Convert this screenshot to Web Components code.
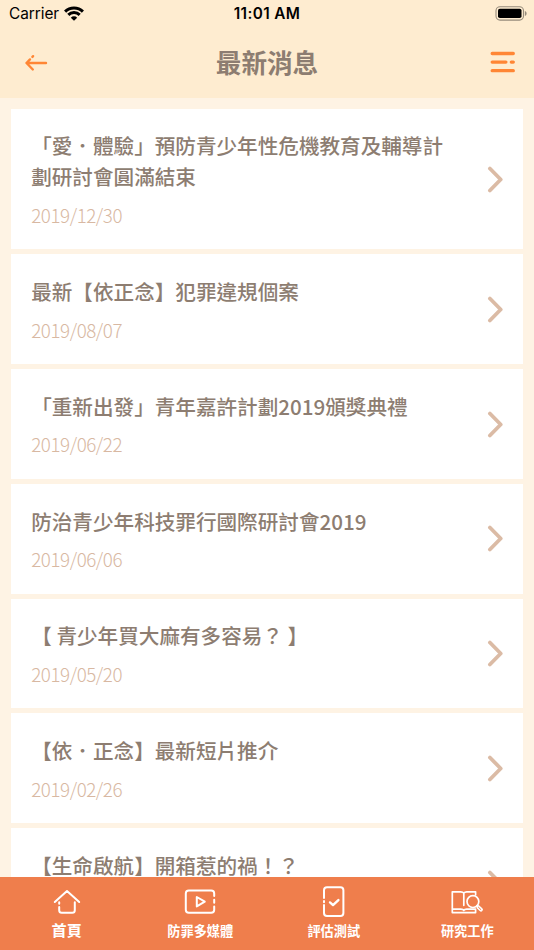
<!DOCTYPE html>
<html lang="zh-Hant">
<head>
<meta charset="utf-8">
<title>最新消息</title>
<style>
  html, body { height: 100%; }
  body {
    margin: 0;
    overflow: hidden;
    background: #fef3e4;
    font-family: "Noto Sans CJK TC", sans-serif;
  }
</style>
</head>
<body>
<news-app></news-app>

<script>
// Attach an open shadow root filled from a template
class BaseElement extends HTMLElement {
  constructor() {
    super();
    this.attachShadow({ mode: "open" });
    const template = document.createElement("template");
    template.innerHTML = this.constructor.markup;
    this.shadowRoot.appendChild(template.content.cloneNode(true));
  }
}

class StatusBar extends BaseElement {
  static markup = `
    <style>
      :host {
        display: grid;
        grid-template-columns: 1fr auto 1fr;
        align-items: center;
        height: 27px;
        padding: 0 7px 0 9px;
        box-sizing: border-box;
        font-family: Inter, sans-serif;
        font-size: 15.4px;
        color: #000;
      }
      .carrier { display: flex; align-items: center; gap: 5px; }
      .carrier span { letter-spacing: -0.05px; }
      .time { margin-right: 2px; font-weight: 600; font-size: 15.3px; letter-spacing: 0.4px; }
      .battery { justify-self: end; display: block; }
      svg { display: block; }
    </style>
    <div class="carrier">
      <span>Carrier</span>
      <svg width="20" height="15" viewBox="0 0 20 15" fill="none" stroke="#000" stroke-width="3">
        <path d="M1.1 5.6a12.6 12.6 0 0 1 17.8 0"/>
        <path d="M4.3 8.9a8.1 8.1 0 0 1 11.4 0"/>
        <path d="M10 14.8 6.8 11.7a4.5 4.5 0 0 1 6.4 0z" fill="#000" stroke="none"/>
      </svg>
    </div>
    <span class="time">11:01 AM</span>
    <svg class="battery" width="32" height="15" viewBox="0 0 32 15">
      <rect x="1" y=".7" width="27.5" height="13.4" rx="4" fill="none" stroke="#968b7b" stroke-width="1.1"/>
      <rect x="3" y="2.7" width="23.5" height="9.4" rx="1.8" fill="#000"/>
      <path d="M29.9 5v5c1.2-.5 1.7-1.4 1.7-2.5s-.5-2-1.7-2.5z" fill="#968b7b"/>
    </svg>
  `;
}

class PageHeader extends BaseElement {
  static markup = `
    <style>
      :host {
        display: grid;
        grid-template-columns: 1fr auto 1fr;
        align-items: center;
        height: 71px;
        padding: 0 18px 2px;
        box-sizing: border-box;
      }
      h1 {
        margin: 0;
        font-size: 25.6px;
        font-weight: 700;
        line-height: 38px;
        color: #8d7d71;
      }
      svg { display: block; }
      .back { margin: 2px 0 0 6px; }
      .menu { justify-self: end; }
    </style>
    <svg class="back" width="25" height="18" viewBox="0 0 25 18" fill="none" stroke="#ff8635" stroke-width="2.4" stroke-linecap="round" stroke-linejoin="round">
      <path d="M22 9H2.5l6.3 6.5M2.5 9 6 5.4M8.4 2.9l.7-.7"/>
    </svg>
    <h1><slot></slot></h1>
    <svg class="menu" width="26" height="22" viewBox="0 0 26 22" fill="none" stroke="#ff8635" stroke-width="3.3" stroke-linecap="round">
      <path d="M2.2 2.5h21.1M2.2 11.1h13.7M21.3 11.1h2M2.2 19.7h21.1"/>
    </svg>
  `;
}

class NewsItem extends BaseElement {
  static markup = `
    <style>
      :host {
        display: flex;
        align-items: center;
        justify-content: space-between;
        padding: 21.8px 20px 17.4px 20.6px;
        background: #fff;
      }
      .text { width: 418px; }
      .title {
        font-size: 20.6px;
        font-weight: 500;
        line-height: 30.9px;
        color: #8d7d71;
      }
      .date {
        margin-top: 6.6px;
        margin-bottom: 2px;
        min-height: 31px;
        font-size: 18.8px;
        font-weight: 300;
        letter-spacing: -0.43px;
        line-height: 31px;
        color: #d8b8a2;
      }
      svg { display: block; flex: none; margin-bottom: 4.2px; }
    </style>
    <div class="text">
      <div class="title"><slot></slot></div>
      <div class="date"></div>
    </div>
    <svg width="16" height="27" viewBox="0 0 16 27" fill="none" stroke="#dbbba5" stroke-width="3.8" stroke-linecap="round" stroke-linejoin="round">
      <path d="M2.9 2.5 13.7 13.5 2.9 24.5"/>
    </svg>
  `;

  connectedCallback() {
    this.shadowRoot.querySelector(".date").textContent = this.getAttribute("date");
  }
}

class TabItem extends BaseElement {
  static icons = {
    home: `<path d="M2.8 15 15 4l12.2 11M7.2 15.2v1.6M7.2 20v3.3c0 1.6.9 2.5 2.5 2.5h10.6c1.6 0 2.5-.9 2.5-2.5v-8"/>`,
    video: `<path d="M29.2 9V6.5c0-2-1-3-3-3H3.8c-2 0-3 1-3 3v16.2c0 2 1 3 3 3h22.4c2 0 3-1 3-3v-3.2M29.2 12.7v3"/><path d="M11.8 10v9.4l8-4.7z"/>`,
    check: `<path d="M5 11V3.3c0-2 1-3 3-3h13.4c2 0 3 1 3 3v22.8c0 2-1 3-3 3H8c-2 0-3-1-3-3v-8M5 13.9v1.4"/><path d="m11 15.4 3 2.7 5.4-5" stroke-width="2.4"/>`,
    study: `<g stroke-width="1.7" transform="translate(-.7 .3)"><path d="M24.3 7.5V4.5H15.5c-1.5 0-2.5.6-3 1.2-.5-.6-1.5-1.2-3-1.2H1v20.8h23.3v-2.8M1 21.8h8.6c1.6 0 2.5.5 2.9 1.3.4-.8 1.3-1.3 2.9-1.3h8.9M12.5 5.7V18"/><circle cx="21.6" cy="14.3" r="5.9" fill="#ef7e4c"/><path d="m25.6 18.3 1.2 1.3"/><path d="m27 19.8 2.7 2.6" stroke-width="3.8"/><path d="m27.2 20 2.3 2.2" stroke="#ef7e4c" stroke-width="1"/></g>`
  };

  static markup = `
    <style>
      :host {
        display: flex;
        flex-direction: column;
        align-items: center;
        padding-top: 10px;
        color: #fff;
        font-size: 13.2px;
        font-weight: 700;
        line-height: 20px;
      }
      :host([active]) { font-size: 15.2px; }
      :host([active]) .label { margin-top: 2.6px; }
      .label { margin-top: 5px; }
      svg { display: block; overflow: visible; }
    </style>
    <svg width="30" height="29" viewBox="0 0 30 29" fill="none" stroke="#fff" stroke-width="2" stroke-linecap="round" stroke-linejoin="round"></svg>
    <span class="label"><slot></slot></span>
  `;

  connectedCallback() {
    this.shadowRoot.querySelector("svg").innerHTML = TabItem.icons[this.getAttribute("icon")];
  }
}

class TabBar extends BaseElement {
  static markup = `
    <style>
      :host {
        display: grid;
        grid-template-columns: repeat(4, 1fr);
        height: 72.6px;
        background: #ef7e4c;
      }
    </style>
    <slot></slot>
  `;
}

class NewsApp extends BaseElement {
  static markup = `
    <style>
      :host { display: flex; flex-direction: column; height: 100%; }
      header { flex: none; background: #feecd0; }
      main {
        flex: 1;
        min-height: 0;
        overflow: hidden;
        display: flex;
        flex-direction: column;
        gap: 5.1px;
        padding: 10.6px 10.6px 0;
      }
      news-item, tab-bar { flex: none; }
    </style>
    <header>
      <status-bar></status-bar>
      <page-header>最新消息</page-header>
    </header>
    <main>
      <news-item date="2019/12/30">「愛．體驗」預防青少年性危機教育及輔導計劃研討會圓滿結束</news-item>
      <news-item date="2019/08/07">最新【依正念】犯罪違規個案</news-item>
      <news-item date="2019/06/22">「重新出發」青年嘉許計劃2019頒獎典禮</news-item>
      <news-item date="2019/06/06">防治青少年科技罪行國際研討會2019</news-item>
      <news-item date="2019/05/20">【 青少年買大麻有多容易？ 】</news-item>
      <news-item date="2019/02/26">【依．正念】最新短片推介</news-item>
      <news-item date="">【生命啟航】開箱惹的禍！？</news-item>
    </main>
    <tab-bar>
      <tab-item icon="home" active>首頁</tab-item>
      <tab-item icon="video">防罪多媒體</tab-item>
      <tab-item icon="check">評估測試</tab-item>
      <tab-item icon="study">研究工作</tab-item>
    </tab-bar>
  `;
}

customElements.define("status-bar", StatusBar);
customElements.define("page-header", PageHeader);
customElements.define("news-item", NewsItem);
customElements.define("tab-item", TabItem);
customElements.define("tab-bar", TabBar);
customElements.define("news-app", NewsApp);
</script>
</body>
</html>
